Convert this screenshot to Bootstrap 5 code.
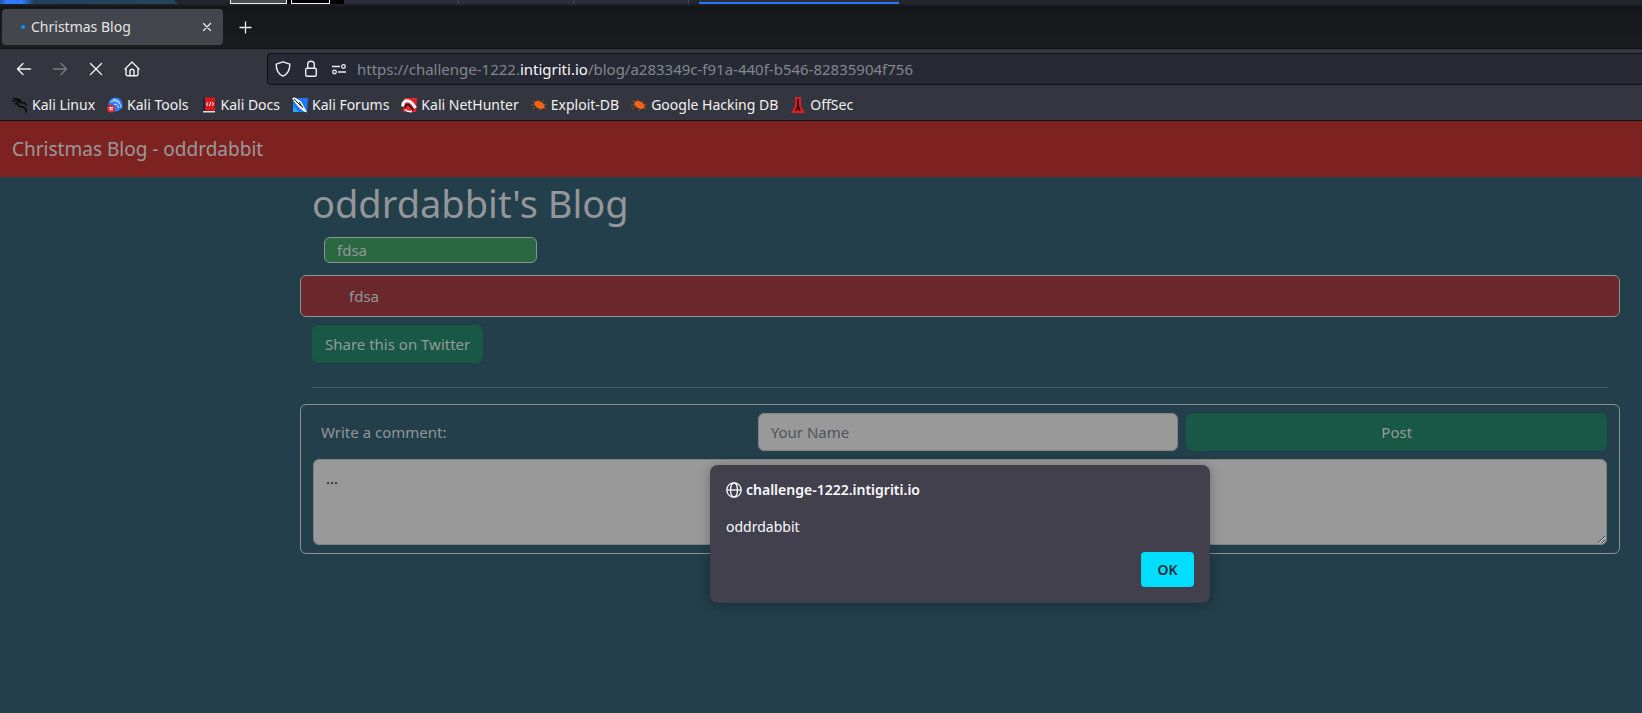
<!DOCTYPE html>
<html lang="en">
<head>
<meta charset="utf-8">
<meta name="viewport" content="width=device-width, initial-scale=1">
<title>Christmas Blog</title>
<link href="https://cdn.jsdelivr.net/npm/bootstrap@5.3.0/dist/css/bootstrap.min.css" rel="stylesheet">
<style>
  :root { --ui: "Noto Sans", "Open Sans", sans-serif; }
  body { font-family: var(--ui); background: #233f4b; color: #949699; font-size: 15px; line-height: 24px; }
  .desk-strip { height: 4px; background: #22262c; overflow: hidden; }
  .desk-strip span { height: 4px; flex: none; }
  .desk-wall { width: 178px; background: linear-gradient(90deg, #1b55a8 0, #2f7bff 6px, #2f7bff 22px, #21415a 34px, #24485a 100%); clip-path: polygon(0 0, 174px 0, 100% 100%, 0 100%); }
  .desk-a { width: 57px; background: #4c4c4c; border: 1px solid #f0f0f0; border-top: 0; margin-left: 52px; }
  .desk-b { width: 39px; background: #000; border: 1px solid #f0f0f0; border-top: 0; box-shadow: 0 0 0 4px #000; margin-left: 4px; }
  .desk-black { width: 14px; background: #000; }
  .desk-win { width: 115px; background: #2b2e3a; border-right: 1px solid #454957; }
  .desk-active { width: 200px; background: linear-gradient(#2a2d35 2px, #2777ff 2px); margin-left: 10px; }
  .tab-strip { height: 45px; padding: 3px 2px 3px; background: linear-gradient(#15161a, #1b1c20); border-top: 2px solid #1b1e23; border-bottom: 1px solid #101114; }
  .tab-item { width: 221px; background: #44464d; border-radius: 4px; color: #e4e4e4; font-size: 14px; line-height: 20px; padding: 0 8px 0 19px; gap: 6px; }
  .tab-dot { width: 4px; height: 4px; border-radius: 50%; background: #1b8cf5; }
  .chrome-btn { background: none; border: 0; padding: 0; display: flex; color: #f0f0f2; }
  .chrome-btn:disabled { color: #797b82; }
  .chrome { background: #34363f; border-bottom: 1px solid #0d0e11; }
  .tool-row { padding: 4px 0 3px 16px; }
  .tool-keys { gap: 20px; width: 251px; }
  .addr { height: 32px; background: #272935; border: 1px solid #0f1014; border-right: 0; border-radius: 4px 0 0 4px; padding: 0 7px; font-size: 15px; color: #84868e; }
  .addr b { font-weight: 400; color: #fbfbfe; }
  .addr-text { margin-left: 10px; }
  .bm-row { height: 32px; gap: 12px; padding: 1px 12px 0; font-size: 14px; line-height: 20px; }
  .bm-row a { color: #f0f0f2; text-decoration: none; gap: 4px; white-space: nowrap; }
  .blog-bar { background: #7d2221; --bs-navbar-brand-color: #999; --bs-navbar-brand-font-size: 19px; }
  .blog-bar .navbar-brand { line-height: 30px; }
  .side-space { width: 278px; flex: none; }
  h1 { font-size: 38px; line-height: 52px; font-weight: 400; color: #949699; }
  .framed { border: 1px solid #8d9296; border-radius: 6px; }
  .post-title { width: 213px; background: #2a6841; padding: 0 12px; margin: 0 24px 12px; }
  .post-body { background: #6a282c; padding: 8px 48px; }
  .btn-pine { --bs-btn-font-size: 15px; --bs-btn-color: #949c99; --bs-btn-bg: #185844; --bs-btn-border-color: #185844; --bs-btn-hover-bg: #1c654e; --bs-btn-hover-color: #aaa; line-height: 24px; }
  .share-btn { margin: 8px 12px 0; }
  hr { color: #a0a6aa; margin: 24px 12px 16px; }
  .comment-head { display: grid; grid-template-columns: 27fr 26fr 26fr; gap: 8px; }
  .form-control, .form-control:focus { background: #99999a; border-color: #7e8285; font-size: 15px; line-height: 24px; }
  .form-control::placeholder { color: #50555b; }
  textarea.form-control { color: #202428; }
  .alert-box { position: absolute; top: 288px; left: 50%; transform: translateX(-50%); width: 500px; max-width: 100%; background: #42404d; border-radius: 8px; box-shadow: 0 2px 12px rgba(0,0,0,.3); padding: 16px; color: #fbfbfe; font-size: 14px; line-height: 18px; }
  .alert-box p { margin: 19px 0 16px; }
  .btn-ok { background: #00ddff; color: #2b2a33; border: 0; border-radius: 4px; font-weight: 600; width: 53px; height: 35px; }
</style>
</head>
<body class="d-flex flex-column min-vh-100">
<header>
  <div class="desk-strip d-flex" aria-hidden="true">
    <span class="desk-wall"></span><span class="desk-a"></span><span class="desk-b"></span><span class="desk-black"></span>
    <span class="desk-win"></span><span class="desk-win"></span><span class="desk-win"></span><span class="desk-active"></span>
  </div>
  <div class="tab-strip d-flex">
    <div class="tab-item d-flex align-items-center">
      <span class="tab-dot"></span><span class="flex-grow-1">Christmas Blog</span>
      <button class="chrome-btn" aria-label="Close tab"><svg width="16" height="16" fill="none" stroke="currentColor" stroke-width="1.2" stroke-linecap="round"><path d="M4.5 4.5l7 7M11.5 4.5l-7 7"/></svg></button>
    </div>
    <button class="chrome-btn align-items-center ms-3" aria-label="New tab"><svg width="13" height="13" fill="none" stroke="currentColor" stroke-width="1.3"><path d="M6.5 .5v12M.5 6.5h12"/></svg></button>
  </div>
  <div class="chrome">
    <div class="tool-row d-flex align-items-center">
      <div class="tool-keys d-flex flex-shrink-0">
        <button class="chrome-btn" aria-label="Back"><svg width="16" height="16" fill="none" stroke="currentColor" stroke-width="1.4" stroke-linecap="round" stroke-linejoin="round"><path d="M7 2.5L1.5 8 7 13.5M1.5 8h13"/></svg></button>
        <button class="chrome-btn" aria-label="Forward" disabled><svg width="16" height="16" fill="none" stroke="currentColor" stroke-width="1.4" stroke-linecap="round" stroke-linejoin="round"><path d="M9 2.5L14.5 8 9 13.5M14.5 8h-13"/></svg></button>
        <button class="chrome-btn" aria-label="Stop"><svg width="16" height="16" fill="none" stroke="currentColor" stroke-width="1.4" stroke-linecap="round"><path d="M2.500 2.500l11 11M13.500 2.500l-11 11"/></svg></button>
        <button class="chrome-btn" aria-label="Home"><svg width="16" height="16" fill="none" stroke="currentColor" stroke-width="1.4" stroke-linejoin="round" stroke-linecap="round"><path d="M1 8L8 1l7 7M2 7.200v6a1.500 1.500 0 0 0 1.500 1.500h9a1.500 1.500 0 0 0 1.500-1.500v-6M6 14.500V10.200a2 2 0 0 1 4 0v4.300"/></svg></button>
      </div>
      <div class="addr d-flex align-items-center flex-grow-1">
        <svg width="16" height="16" fill="none" stroke="#f0f0f2" stroke-width="1.4" stroke-linejoin="round"><path d="M8 .8l6.800 2.400c0 5.300-1.700 9.800-6.800 12-5.100-2.200-6.800-6.700-6.800-12z"/></svg>
        <svg class="ms-2 me-2" width="24" height="18" fill="none" stroke="#f0f0f2" stroke-width="1.4"><rect x="6.700" y="8.200" width="10.600" height="8" rx="1.500"/><path d="M8.700 8V4.500a3.300 3.300 0 0 1 6.600 0V8"/></svg>
        <svg width="16" height="16" fill="none" stroke="#f0f0f2" stroke-width="1.3"><path d="M1 5.500h8M7 11h8"/><circle cx="12.500" cy="5.500" r="1.800"/><circle cx="3.500" cy="11" r="1.800"/></svg>
        <span class="addr-text text-nowrap">https://challenge-1222.<b>intigriti.io</b>/blog/a283349c-f91a-440f-b546-82835904f756</span>
      </div>
    </div>
    <nav class="bm-row d-flex align-items-center" aria-label="Bookmarks">
      <a class="d-flex align-items-center" href="#"><svg width="16" height="16" fill="none" stroke="#08090b" stroke-linecap="round"><path d="M1 1.500c3 0 6 .5 8 2.500M.5 4.500c3-1.500 6-1 8.500 0M3 7c2-1.500 4-2 6-1.500 3 0 5 1.500 5.500 3" stroke-width="1.300"/><path d="M5.500 6.500c0 3 3 3 5 3.500 3 .8 4 2.500 3.500 5" stroke-width="1.600"/></svg>Kali Linux</a>
      <a class="d-flex align-items-center" href="#"><svg width="16" height="16"><circle cx="8.500" cy="7.500" r="7" fill="#2a7fff"/><path d="M3 5c4-2 7-1 9 1s2 3 2.500 5M6 2.500c3 0 5 1 7 3M7 7.500c3-1 4 1 4.500 3.500" fill="none" stroke="#d8e7ff"/><circle cx="4" cy="11.500" r="4" fill="#e3232d"/><path d="M2 10.500h4M3.200 10.500v3M5 10.500v3" stroke="#fff" fill="none"/></svg>Kali Tools</a>
      <a class="d-flex align-items-center" href="#"><svg width="16" height="16"><path d="M2 1h2v13H2z" fill="#1c2148"/><path d="M4 .5h10v13H4z" fill="#d9141b"/><path d="M2 14h12v1.500H2z" fill="#e5dcdc"/><path d="M7 5L5.500 7 7 9M11 5l1.500 2L11 9M9.700 5l-1.200 4" stroke="#fff" fill="none"/></svg>Kali Docs</a>
      <a class="d-flex align-items-center" href="#"><svg width="16" height="16"><path d="M1 1h15l-1 14H1z" fill="#2476f5"/><path d="M1 9l6 6H1z" fill="#25a7ff"/><path d="M0 1l3-.5 6 4 4 7 2 4-3-1-5-4-4-5z" fill="#fff"/><path d="M2 2l7 7M7 5l4 6" stroke="#161a22" fill="none"/></svg>Kali Forums</a>
      <a class="d-flex align-items-center" href="#"><svg width="16" height="16"><path d="M3 1h13l-1 14H2z" fill="#e8232f"/><path d="M2 9.500C1 5 5 2.500 9 4.500c3 1.500 4 4 5.500 6.500" fill="none" stroke="#fff" stroke-width="3"/><path d="M4.500 11c-1-3 2-4.500 4-2.500l4 4.500" fill="none" stroke="#1a1114" stroke-width="1.500"/><path d="M4 12.500c2 2 4 2.500 7 2" stroke="#fff" stroke-width="1.600" fill="none"/></svg>Kali NetHunter</a>
      <a class="d-flex align-items-center" href="#"><svg width="16" height="16"><path d="M1 4l4 1M3 8H0M4 10l-3 2M8 4L6 2M11 5l2-2M13 8l3-1M13 11l3 1M9 12l-1 2" stroke="#8d4a20"/><ellipse cx="8.500" cy="8" rx="5.500" ry="3.500" transform="rotate(25 8.500 8)" fill="#f26411"/></svg>Exploit-DB</a>
      <a class="d-flex align-items-center" href="#"><svg width="16" height="16"><path d="M1 4l4 1M3 8H0M4 10l-3 2M8 4L6 2M11 5l2-2M13 8l3-1M13 11l3 1M9 12l-1 2" stroke="#8d4a20"/><ellipse cx="8.500" cy="8" rx="5.500" ry="3.500" transform="rotate(25 8.500 8)" fill="#f26411"/></svg>Google Hacking DB</a>
      <a class="d-flex align-items-center" href="#"><svg width="16" height="16"><path d="M5 0h6v9l4 7H1l4-7z" fill="#dc1f26"/><path d="M7 2h2v7l2 5H9l-1-3-1 3H5l2-5z" fill="#3a0709"/></svg>OffSec</a>
    </nav>
  </div>
</header>
<nav class="navbar blog-bar"><div class="container-fluid"><a class="navbar-brand" href="#">Christmas Blog - oddrdabbit</a></div></nav>
<div class="d-flex flex-grow-1">
  <div class="side-space"></div>
  <main class="flex-grow-1 position-relative">
    <div class="container px-0">
      <h1 class="mx-2 ps-1">oddrdabbit's Blog</h1>
      <div class="framed post-title">fdsa</div>
      <div class="framed post-body">fdsa</div>
      <button class="btn btn-pine share-btn">Share this on Twitter</button>
      <hr>
      <form class="framed p-2">
        <div class="mx-1">
          <div class="comment-head mb-2">
            <label class="align-self-center ps-2" for="comment">Write a comment:</label>
            <input class="form-control" type="text" placeholder="Your Name" aria-label="Your Name">
            <button class="btn btn-pine" type="button">Post</button>
          </div>
          <textarea class="form-control" id="comment" rows="3">...</textarea>
        </div>
      </form>
    </div>
    <div class="alert-box" role="alertdialog" aria-labelledby="alert-site">
      <div class="d-flex align-items-center gap-1 fw-semibold" id="alert-site"><svg width="16" height="16" fill="none" stroke="currentColor" stroke-width="1.3"><circle cx="8" cy="8" r="7.200"/><ellipse cx="8" cy="8" rx="3.500" ry="7.200"/><path d="M1 8h14"/></svg>challenge-1222.intigriti.io</div>
      <p>oddrdabbit</p>
      <div class="d-flex justify-content-end"><button class="btn-ok">OK</button></div>
    </div>
  </main>
</div>
<script src="https://cdn.jsdelivr.net/npm/bootstrap@5.3.0/dist/js/bootstrap.bundle.min.js"></script>
</body>
</html>
